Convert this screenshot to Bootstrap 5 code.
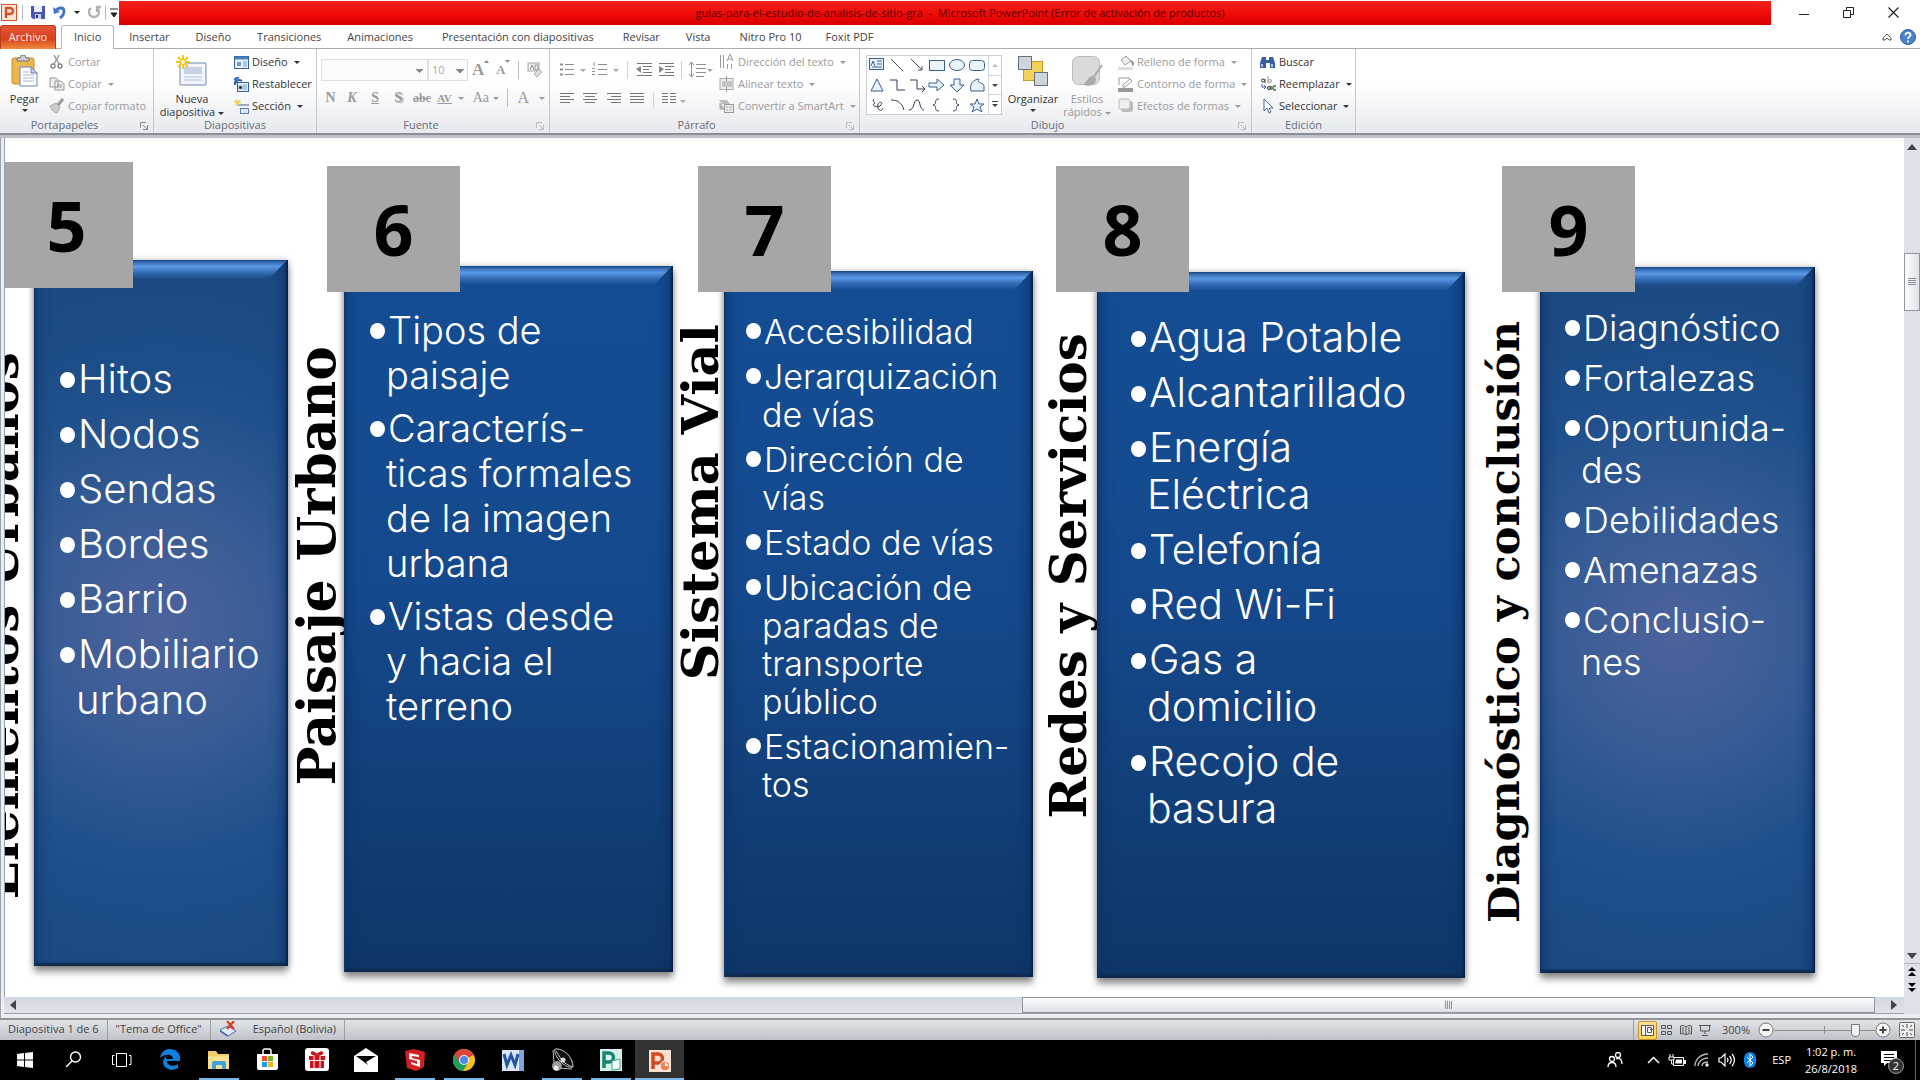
<!DOCTYPE html>
<html lang="es">
<head>
<meta charset="utf-8">
<meta name="viewport" content="width=device-width, initial-scale=1">
<title>guias-para-el-estudio-de-analisis-de-sitio-gra - Microsoft PowerPoint</title>
<link href="https://cdn.jsdelivr.net/npm/bootstrap@5.3.0/dist/css/bootstrap.min.css" rel="stylesheet">
<style>
body{font-family:"Open Sans","Noto Sans",sans-serif;font-size:11px;line-height:16px;color:#333;background:#fff;overflow:hidden}
svg{display:block;flex:none}
button{font:inherit;color:inherit;border:0;background:none;padding:0;margin:0}
.dis,.dis button{color:#9a9a9a}
.titlebar{height:25px}
.quick{width:119px;padding-left:1px}
.vsep{width:1px;background:#b9bdc3}
.redbar{background:linear-gradient(#f3241d,#f00c08 50%,#d90000);color:#5c0000;height:24px;margin-top:1px;width:1652px;flex:0 1 auto;padding-left:30px}
.winctl button{width:45px}
.tabs{height:24px;border-bottom:1px solid #a9aeb2}
.tabs .tab{height:24px;padding:4px 13px 0;color:#444;text-decoration:none;line-height:16px}
.tabs .filetab{width:56px;padding:3px 0 0;text-align:center;color:#ffeee6;background:linear-gradient(#e5573a,#d9401c 55%,#f08a3c);border:1px solid #b93d1e;border-bottom:0;border-radius:3px 3px 0 0;margin-right:5px}
.tabs .active{border:1px solid #b4b8bd;border-bottom:0;background:#fff;border-radius:3px 3px 0 0;padding:3px 12px 0;height:24px;margin-right:2px}
.ribbon{height:86px;background:linear-gradient(#fff 40%,#e6e9ee);border-bottom:2px solid #8b9097}
.rgroup{border-right:1px solid #c3c8ce;padding-top:2px;height:84px}
.rbody{height:66px}
.rlabel{height:16px;text-align:center;color:#666d78;position:relative}
.rlabel svg{position:absolute;right:5px;top:5px}
.stack button{height:22px;display:flex;align-items:center;gap:3px;white-space:nowrap}
.bigbtn{line-height:13px;text-align:center;display:flex;flex-direction:column;align-items:center}
.bigbtn svg.ico{margin-bottom:5px}
.dd{display:inline-block;border:3px solid transparent;border-top-color:currentColor;border-bottom:0;margin-left:3px;vertical-align:middle}
.serifb{font-family:"Liberation Serif",serif;font-size:14px;font-weight:700;color:#8b8b8b;text-align:center}
.fbox{height:22px;border:1px solid #dcdfe3;color:#a9a9a9;font-size:11px;border-radius:0;appearance:none;padding:0 3px;background:linear-gradient(45deg,transparent 50%,#888 50%) right 7px top 9px/4px 4px no-repeat,linear-gradient(-45deg,transparent 50%,#888 50%) right 3px top 9px/4px 4px no-repeat,#fbfbfc}
.gallery{border:1px solid #c9ced5;width:136px;height:60px;background:#fff}
.band{height:3px;background:#bcc0c7}
.work{min-height:0;border-left:1px solid #9ba1a9;padding-left:3px;background:#eceef2}
.slide{background:#fff;border-left:1px solid #9ba1a9;overflow:hidden;position:relative}
.panel{position:absolute;height:706px;color:#fff;background:linear-gradient(#134d94,#15498d 45%,#0e3667);box-shadow:inset -2px 0 2px #0a2347,inset 2px 0 2px #12366a,inset -14px 0 12px -8px #0b3064aa,inset 14px 0 12px -8px #0b306466,inset 0 -3px 2px #152c4b,0 6px 7px #0006,0 0 6px #0004;font-family:Inter,"Liberation Sans",sans-serif;font-weight:300}
.panel::before{content:"";position:absolute;left:0;right:1px;top:0;height:19px;background:linear-gradient(#174580,#3a72bb 15%,#5b98e5 35%,#2f66ae 70%,#17509700);clip-path:polygon(0 0,100% 0,calc(100% - 18px) 100%,0 100%)}
.panel.glow{background:radial-gradient(circle 330px at 50% 52%,#4d639c,#385c96 35%,#1f508b 70%,#1b4a84)}
.panel ul{list-style:none;margin:0;padding:0;display:grid;gap:8px}
.panel li{text-indent:-16px;white-space:nowrap}
.panel li::before{content:"";display:inline-block;width:15px;height:16px;border-radius:50%;background:#fff;vertical-align:5px;margin-right:3px}
.badgebox{position:absolute;width:133px;height:126px;background:#a6a6a6;color:#000;font:700 70px/126px "Open Sans","Noto Sans",sans-serif;text-align:center}
.vlabel{position:absolute;writing-mode:vertical-rl;transform:rotate(180deg);font-family:"DejaVu Serif",serif;font-weight:700;color:#000;white-space:nowrap;line-height:60px}
.vscroll{width:16px;background:#dde1e9}
.vscroll button,.hscroll button{display:flex;align-items:center;justify-content:center}
.vthumb{height:58px;border:1px solid #8f959e;background:linear-gradient(90deg,#fbfcfd,#dfe3e9)}
.hscroll{height:17px;background:linear-gradient(#d3d8e1,#dfe3ea);border-bottom:1px solid #9ba1a9}
.hthumb{border:1px solid #8f959e;background:linear-gradient(#fafbfc,#dfe3e8)}
.status{height:22px;background:linear-gradient(#e2e4e7,#bfc3c9);border-top:2px solid #8f959d;color:#444}
.status .cell{border-right:1px solid #9a9fa7;height:20px;display:flex;align-items:center;white-space:nowrap;padding-bottom:2px}
.viewbtn{width:19px;height:19px;display:flex;align-items:center;justify-content:center}
.viewbtn.on{background:linear-gradient(#fbe49a,#fdd352);border:1px solid #c8912c;border-radius:2px}
.zoomr{appearance:none;width:101px;height:16px;background:linear-gradient(#8a8f96,#8a8f96) 50px 50%/1px 8px no-repeat,linear-gradient(#8a8f96,#8a8f96) 0 50%/100% 1px no-repeat}
.zoomr::-webkit-slider-thumb{appearance:none;width:9px;height:13px;background:#f2f2f2;border:1px solid #777;border-radius:1px 1px 5px 5px}
.task{height:40px;background:#000;color:#fff}
.task .app{width:49px;height:40px;display:flex;align-items:center;justify-content:center;border-bottom:2px solid transparent;padding-top:1px}
.task .run{background:linear-gradient(#76b9ed,#76b9ed) 50% 100%/40px 2px no-repeat;border:0;padding-bottom:1px}
.task .cur{background:linear-gradient(#76b9ed,#76b9ed) 50% 100%/100% 2px no-repeat,#333;border:0}
.clock{font-size:11px;line-height:17px;text-align:center;width:64px}
</style>
<script src="https://cdn.jsdelivr.net/npm/bootstrap@5.3.0/dist/js/bootstrap.bundle.min.js"></script>
</head>
<body class="vh-100 d-flex flex-column">
<header class="titlebar d-flex">
  <div class="quick d-flex align-items-center">
    <svg width="17" height="18" viewBox="0 0 17 18"><rect x=".5" y=".5" width="15" height="16" fill="#fbe3d5" stroke="#d1542b"/><path d="M5 14V4h4a3 3 0 0 1 0 6H6" fill="none" stroke="#d1542b" stroke-width="2.4"/></svg>
    <span class="vsep ms-1 me-2" style="height:15px"></span>
    <button aria-label="Guardar"><svg width="14" height="15" viewBox="0 0 14 15"><path d="M0 1h14v13H2l-2-2z" fill="#4a55b4"/><path d="M3 1h8v6H3z" fill="#e9edfa"/><path d="M4 9h6v5H4z" fill="#c9cfe8"/><path d="M5 10h2v3H5z" fill="#2d3578"/></svg></button>
    <button class="ms-2" aria-label="Deshacer"><svg width="13" height="15" viewBox="0 0 13 15"><path d="M0 2l1 7 6-2z" fill="#3f74c8"/><path d="M3 6c2-4 8-4 8 0 0 3-1 5-4 7" fill="none" stroke="#3f74c8" stroke-width="2.8"/></svg></button>
    <span class="dd ms-2" style="color:#222"></span>
    <button class="ms-2" aria-label="Rehacer"><svg width="13" height="15" viewBox="0 0 13 15"><path d="M3 3a5 5 0 1 0 6 0M9 7V2h4" fill="none" stroke="#b3b3b3" stroke-width="2.4"/></svg></button>
    <span class="vsep ms-1" style="height:15px"></span>
    <svg class="ms-1" width="8" height="10" viewBox="0 0 8 10"><path d="M0 1h8M1 5h6l-3 4z" stroke="#222" fill="#222"/></svg>
  </div>
  <div class="redbar d-flex align-items-center justify-content-center">guias-para-el-estudio-de-analisis-de-sitio-gra&nbsp; -&nbsp; Microsoft PowerPoint (Error de activación de productos)</div>
  <div class="winctl d-flex ms-auto me-1">
    <button aria-label="Minimizar"><svg class="m-auto" width="10" height="10"><path d="M0 6.500h10" stroke="#222"/></svg></button>
    <button aria-label="Restaurar"><svg class="m-auto" width="11" height="11"><path d="M.5 3.500h7v7h-7zM3.500 3V.5h7v7H8" fill="none" stroke="#222"/></svg></button>
    <button aria-label="Cerrar"><svg class="m-auto" width="11" height="11"><path d="M.5.5l10 10M10.500.5l-10 10" stroke="#222" stroke-width="1.200"/></svg></button>
  </div>
</header>
<nav class="tabs d-flex">
  <a href="#" class="tab filetab">Archivo</a><a href="#" class="tab active">Inicio</a><a href="#" class="tab">Insertar</a><a href="#" class="tab">Diseño</a><a href="#" class="tab">Transiciones</a><a href="#" class="tab">Animaciones</a><a href="#" class="tab px-3">Presentación con diapositivas</a><a href="#" class="tab">Revisar</a><a href="#" class="tab">Vista</a><a href="#" class="tab px-3">Nitro Pro 10</a><a href="#" class="tab ps-2">Foxit PDF</a>
  <div class="ms-auto d-flex align-items-center gap-2 pe-1">
    <svg width="10" height="9"><path d="M1 6l4-4 4 4v2H7L5 6 3 8H1z" fill="none" stroke="#555"/></svg>
    <button aria-label="Ayuda"><svg width="16" height="16"><circle cx="8" cy="8" r="7.500" fill="#4a80d0" stroke="#2c5fae"/><path d="M5.500 6.300c0-3.500 5-3.300 5-.3 0 2-2.500 1.800-2.500 4M8 11.500v2" fill="none" stroke="#fff" stroke-width="1.800"/></svg></button>
  </div>
</nav>
<div class="ribbon d-flex">
  <section class="rgroup" style="width:154px">
    <div class="rbody d-flex">
      <button class="bigbtn ms-2" style="width:33px"><svg class="ico mt-1" width="28" height="32" viewBox="0 0 28 32"><rect x="1" y="3" width="22" height="26" rx="2" fill="#eab84f" stroke="#c98f2b"/><path d="M6 6V3h3a3 3 0 0 1 6 0h3v3z" fill="#ccc" stroke="#777"/><path d="M9 12h11l6 6v13H9z" fill="#fff" stroke="#6b83b5"/><path d="M12 17h6M12 20h11M12 23h11M12 26h11" stroke="#a9b9d9"/><path d="M20 12v6h6z" fill="#c6d3ea" stroke="#6b83b5"/></svg>Pegar<span class="dd mt-1 mx-0"></span></button>
      <div class="stack dis ms-2">
        <button><svg width="16" height="16"><path d="M5 1l5 9M10 1L5 10" stroke="#999" stroke-width="1.500"/><circle cx="4" cy="12" r="2" fill="none" stroke="#888" stroke-width="1.500"/><circle cx="11" cy="12" r="2" fill="none" stroke="#888" stroke-width="1.500"/></svg>Cortar</button>
        <button><svg width="16" height="16"><path d="M1 2h6l2 2v7H1zM6 5h6l3 3v6H6z" fill="#eee" stroke="#999"/><path d="M8 9h5M8 11h5" stroke="#999"/></svg>Copiar <span class="dd"></span></button>
        <button><svg width="16" height="16"><path d="M1 8l6-3 4 4-3 6c-2 0-6-3-7-7z" fill="#ccc" stroke="#aaa"/><path d="M9 7l5-6" stroke="#999" stroke-width="3"/></svg>Copiar formato</button>
      </div>
    </div>
    <div class="rlabel pe-4">Portapapeles<svg width="8" height="8"><path d="M.5 6V.5H6M3 3l4 4M7.500 3v4.500H3" fill="none" stroke="#888"/></svg></div>
  </section>
  <section class="rgroup" style="width:163px">
    <div class="rbody d-flex">
      <button class="bigbtn" style="width:76px"><svg class="ico mt-1" width="32" height="32" viewBox="0 0 32 32"><rect x="4" y="8" width="26" height="22" rx="1" fill="#f3f7fd" stroke="#7086b2"/><rect x="8" y="12" width="18" height="7" fill="#c6d2e8"/><path d="M8 22h18M8 25h18" stroke="#b0bfda"/><path d="M7 0v14M0 7h14M2 2l10 10M12 2L2 12" stroke="#f3c61e" stroke-width="2"/><circle cx="7" cy="7" r="2" fill="#fff8c0"/></svg>Nueva<span class="text-nowrap">diapositiva<span class="dd"></span></span></button>
      <div class="stack ms-1">
        <button><svg width="15" height="15"><rect x=".5" y="1.500" width="14" height="12" fill="#eaf1fb" stroke="#35619b"/><path d="M1 3h13" stroke="#4d7fc0" stroke-width="3"/><path d="M3 7h4v4H3z" fill="#6f9bd4"/><path d="M9 7h4M9 9h4M9 11h4" stroke="#6f9bd4"/></svg>Diseño<span class="dd"></span></button>
        <button><svg width="15" height="15"><rect x="3.500" y="5.500" width="11" height="9" fill="#eaf1fb" stroke="#35619b"/><path d="M9 8h4M9 10h4M9 12h4M5 9h3v3H5z" stroke="#6f9bd4"/><path d="M1 8c-1-5 4-6 7-4M5 0L1 2l2 4" fill="none" stroke="#2c62b8" stroke-width="2"/></svg>Restablecer</button>
        <button><svg width="15" height="15"><path d="M4 5h11v2H4z" fill="#9eaac0"/><rect x="6.500" y="9.500" width="8" height="5" fill="#dfe8f5" stroke="#5d7dae"/><path d="M3 0v7M0 3h7M1 1l5 5M6 1L1 6" stroke="#f0c52c"/></svg>Sección<span class="dd"></span></button>
      </div>
    </div>
    <div class="rlabel">Diapositivas</div>
  </section>
  <section class="rgroup dis" style="width:233px">
    <div class="rbody px-1 d-flex flex-column">
      <div class="d-flex align-items-center pt-2">
        <select class="fbox" style="width:107px" aria-label="Fuente"><option></option></select>
        <select class="fbox" style="width:40px" aria-label="Tamaño"><option>10</option></select>
        <button class="serifb ms-1 d-flex" style="width:20px;font-size:17px;line-height:20px">A<svg width="5" height="4"><path d="M0 3h5L2.500 0z" fill="#888"/></svg></button><button class="serifb ms-1 d-flex" style="width:22px;font-size:13px;line-height:20px">A<svg width="5" height="4"><path d="M0 0h5L2.500 3z" fill="#888"/></svg></button>
        <span class="vsep me-2" style="height:18px"></span>
        <button aria-label="Borrar formato"><svg width="16" height="16"><rect x="1" y="1" width="11" height="8" fill="#eee" stroke="#aaa"/><path d="M3 8l2-5 2 5M8 3h3v5H8z" fill="none" stroke="#999"/><path d="M7 12l5-5 3 3-5 5z" fill="#ddd" stroke="#aaa"/></svg></button>
      </div>
      <div class="d-flex align-items-center pt-2">
        <button class="serifb" style="width:20px">N</button><button class="serifb fst-italic" style="width:24px">K</button><button class="serifb text-decoration-underline" style="width:24px">S</button><button class="serifb" style="width:24px;text-shadow:2px 1px 1px #aaa">S</button><button class="serifb text-decoration-line-through" style="width:25px;font-size:12px">abc</button><button class="serifb text-nowrap text-decoration-underline" style="width:22px;font-size:11px">AV</button><span class="dd"></span><button class="serifb fw-normal ms-2" style="width:18px">Aa</button><span class="dd"></span><span class="vsep mx-2" style="height:18px"></span><button class="serifb fw-normal" style="width:16px;font-size:16px">A</button><span class="dd ms-2"></span>
      </div>
    </div>
    <div class="rlabel pe-4">Fuente<svg width="8" height="8"><path d="M.5 6V.5H6M3 3l4 4M7.500 3v4.500H3" fill="none" stroke="#bbb"/></svg></div>
  </section>
  <section class="rgroup dis" style="width:310px">
    <div class="rbody d-flex">
      <div class="ps-2" style="width:169px">
        <svg width="161" height="64" viewBox="0 0 161 64" fill="none" stroke="#8f8f8f"><path d="M7 13.500h9M7 18.500h9M7 23.500h9M40 13.500h9M40 18.500h9M40 23.500h9"/><path d="M2 13.500h3M2 18.500h3M2 23.500h3" stroke-width="2"/><path d="M36 11v4M34 17.500h3M34 20.500h3M34 23.500h3"/><path d="M22 18h6l-3 3zM55 18h6l-3 3zM149 18h6l-3 3zM122 49h6l-3 3z" fill="#aaa" stroke="none"/><path d="M69.500 10v18M123.500 10v18M95.500 42v14" stroke="#d0d3d8"/><path d="M79 12.500h15M85 15.500h9M85 18.500h6M85 21.500h9M79 24.500h15M101 12.500h15M107 15.500h9M107 18.500h6M107 21.500h9M101 24.500h15" stroke="#777"/><path d="M83 15l-5 3 5 4zM101 15l5 3-5 4z" fill="#888" stroke="none"/><path d="M133.500 11v15M131 14l2.500-3 2.500 3M131 23l2.500 3 2.500-3M138 13.500h10M138 17.500h10M138 21.500h10M138 25.500h8"/><g stroke="#777"><path d="M2 42.500h14M2 45.500h10M2 48.500h14M2 51.500h10M25 42.500h14M27 45.500h10M25 48.500h14M27 51.500h10M49 42.500h14M53 45.500h10M49 48.500h14M53 51.500h10M72 42.500h14M72 45.500h14M72 48.500h14M72 51.500h14M104 42.500h6M104 45.500h6M104 48.500h6M104 51.500h6M112 42.500h6M112 45.500h6M112 48.500h6M112 51.500h6"/></g></svg>
      </div>
      <div class="stack">
        <button><svg width="16" height="16"><path d="M1.500 1v13M4.500 1v13M8.500 10v5M12.500 10v5M8 7l3-7 3 7M9 5h4" fill="none" stroke="#999"/></svg>Dirección del texto<span class="dd"></span></button>
        <button><svg width="16" height="16"><rect x="1" y="2.500" width="13" height="11" fill="#eee" stroke="#aaa"/><path d="M3 6h10M3 8h10M3 10h10M7.500 0v5M7.500 16v-5" stroke="#999"/></svg>Alinear texto <span class="dd"></span></button>
        <button><svg width="16" height="16"><path d="M0 2h8l3 4H3z" fill="#bbb"/><rect x="5.500" y="6.500" width="9" height="8" fill="#eee" stroke="#999"/><path d="M1 5l4 6H1zM7 9h2M10 9h3M7 12h2M10 12h3" fill="#bbb" stroke="#aaa"/></svg>Convertir a SmartArt<span class="dd"></span></button>
      </div>
    </div>
    <div class="rlabel pe-3">Párrafo<svg width="8" height="8"><path d="M.5 6V.5H6M3 3l4 4M7.500 3v4.500H3" fill="none" stroke="#bbb"/></svg></div>
  </section>
  <section class="rgroup" style="width:392px">
    <div class="rbody d-flex">
      <div class="gallery ms-2 mt-1 flex-shrink-0" style="margin-left:6px!important"><svg width="134" height="58" viewBox="0 0 134 58" fill="#e9f3fc" stroke="#3a5f8f"><rect x="2.500" y="2.500" width="14" height="11"/><path d="M4 10l2-5 2 5M10 5h5M10 8h5M5 11h10" fill="none"/><path d="M24 3l12 12M44 3l11 11M55 14v-4M55 14h-4" fill="none" stroke="#444c66"/><rect x="62.500" y="4.500" width="15" height="10"/><ellipse cx="90" cy="9" rx="7.500" ry="5.500"/><rect x="102.500" y="4.500" width="15" height="10" rx="3"/><path d="M4 35l6-12 6 12z"/><path d="M23 24h7v10h8M43 24h7v9h8M55 30l3 3-3 3" fill="none" stroke="#333b55"/><path d="M62 27h8v-4l7 6-7 6v-4h-8zM87 23h6v6h4l-7 7-7-7h4zM104 35c-2-7 3-12 8-12-3 5 5 3 5 7v5z"/><path d="M7 43c-3 2 3 4 0 5s4 5 7 1-5-4-3 3c1 3 4 3 5 0M24 44c7 0 11 3 13 10M42 54c6 0 4-10 8-10s2 10 7 10M72 43c-6 0-1 5-6 6 5 1 0 6 6 6M86 43c6 0 1 5 6 6-5 1 0 6-6 6" fill="none" stroke="#333b55"/><path d="M110 43l2 5h5l-4 3 2 5-5-3-5 3 2-5-4-3h5z"/><path d="M121.500 0v58M121 19.500h13M121 38.500h13" stroke="#d0d4da"/><path d="M125 11h6l-3-3z" fill="#bbb" stroke="none"/><path d="M125 28h6l-3 3zM125 48h6l-3 3zM125 45h6v1h-6z" fill="#444" stroke="none"/></svg></div>
      <button class="bigbtn ms-1" style="width:54px"><svg class="ico mt-1" width="32" height="32" viewBox="0 0 32 32"><rect x="6.500" y="6.500" width="19" height="19" fill="#f3d25c" stroke="#c79b26"/><rect x="1.500" y="1.500" width="13" height="13" fill="#cfd3da" stroke="#666e7c"/><rect x="17.500" y="17.500" width="13" height="13" fill="#cfd3da" stroke="#666e7c"/></svg>Organizar<span class="dd mt-1 mx-0"></span></button>
      <button class="bigbtn dis" style="width:54px"><svg class="ico mt-1" width="32" height="32" viewBox="0 0 32 32"><rect x="1.500" y="1.500" width="27" height="28" rx="6" fill="#dcd9dd" stroke="#bbb"/><path d="M31 10l-9 13M22 22c-4 0-5 5-8 7 5 2 10 0 10-5z" fill="#aaa" stroke="#aaa" stroke-width="2"/></svg>Estilos<span class="text-nowrap">rápidos<span class="dd"></span></span></button>
      <div class="stack dis ms-1">
        <button><svg width="16" height="16"><path d="M3 6l5-4 5 5-6 4z" fill="#eee" stroke="#999"/><path d="M13 7c3 2 2 4 1 4" fill="none" stroke="#888" stroke-width="2"/><path d="M0 13h15v3H0z" fill="#ddd"/></svg>Relleno de forma<span class="dd"></span></button>
        <button><svg width="16" height="16"><path d="M1 9V2h11M5 9l7-6 2 2-7 6H5z" fill="none" stroke="#999"/><path d="M0 12h15v4H0z" fill="#999"/></svg>Contorno de forma<span class="dd"></span></button>
        <button><svg width="16" height="16"><rect x="3" y="3" width="12" height="11" rx="3" fill="#bbb"/><rect x="1" y="1" width="11" height="10" rx="2" fill="#eee" stroke="#bbb"/></svg>Efectos de formas<span class="dd"></span></button>
      </div>
    </div>
    <div class="rlabel pe-3">Dibujo<svg width="8" height="8"><path d="M.5 6V.5H6M3 3l4 4M7.500 3v4.500H3" fill="none" stroke="#bbb"/></svg></div>
  </section>
  <section class="rgroup" style="width:104px">
    <div class="rbody stack ps-2">
      <button><svg width="16" height="14"><path d="M2 2h4v3h3V2h4l2 6v5h-5V8H6v5H0V8z" fill="#3a5d9e"/><path d="M2 9v3M12 9v3" stroke="#a9c3ee" stroke-width="2"/></svg>Buscar</button>
      <button><svg width="16" height="16" fill="none"><circle cx="3" cy="4.500" r="1.500" stroke="#333"/><path d="M5 3v4" stroke="#333"/><path d="M8 0v7" stroke="#999"/><circle cx="10" cy="5" r="1.500" stroke="#999"/><path d="M2 8v3h4M4 9l2 2-2 2" stroke="#3a62b0"/><circle cx="9" cy="12" r="1.500" stroke="#222"/><path d="M11 10v4" stroke="#222"/><path d="M16 10c-4-1-4 5 0 4" stroke="#2c9430" stroke-width="1.800"/></svg>Reemplazar<span class="dd"></span></button>
      <button><svg width="16" height="16"><path d="M4 1v12l3-3 2 5 2-1-2-4h4z" fill="#fff" stroke="#4a669e"/></svg>Seleccionar<span class="dd"></span></button>
    </div>
    <div class="rlabel">Edición</div>
  </section>
</div>
<div class="band"></div>
<main class="work d-flex flex-grow-1 pb-1">
  <div class="d-flex flex-column flex-grow-1">
    <div class="slide flex-grow-1">
      <div class="vlabel" style="left:-34px;top:214px;font-size:50px">Elementos Urbanos</div>
      <div class="vlabel" style="left:282px;top:208px;font-size:52px">Paisaje Urbano</div>
      <div class="vlabel" style="left:665px;top:186px;font-size:51px">Sistema Vial</div>
      <div class="vlabel" style="left:1034px;top:195px;font-size:50px">Redes y Servicios</div>
      <div class="vlabel" style="left:1469px;top:183px;font-size:43px">Diagnóstico y conclusión</div>

      <div class="panel glow" style="left:29px;top:122px;width:254px;padding:96px 0 0 42px;font-size:40px;line-height:46px">
        <ul style="gap:9px"><li>Hitos</li><li>Nodos</li><li>Sendas</li><li>Bordes</li><li>Barrio</li><li>Mobiliario<br>urbano</li></ul></div>
      <div class="panel" style="left:339px;top:128px;width:329px;padding:42px 0 0 42px;font-size:38px;line-height:45px">
        <ul><li>Tipos de<br>paisaje</li><li>Caracterís-<br>ticas formales<br>de la imagen<br>urbana</li><li>Vistas desde<br>y hacia el<br>terreno</li></ul></div>
      <div class="panel" style="left:719px;top:133px;width:309px;padding:42px 0 0 38px;font-size:34px;line-height:38px">
        <ul style="gap:7px"><li>Accesibilidad</li><li>Jerarquización<br>de vías</li><li>Dirección de<br>vías</li><li>Estado de vías</li><li>Ubicación de<br>paradas de<br>transporte<br>público</li><li>Estacionamien-<br>tos</li></ul></div>
      <div class="panel" style="left:1092px;top:134px;width:368px;padding:42px 0 0 50px;font-size:41px;line-height:47px">
        <ul><li>Agua Potable</li><li>Alcantarillado</li><li>Energía<br>Eléctrica</li><li>Telefonía</li><li>Red Wi-Fi</li><li>Gas a<br>domicilio</li><li>Recojo de<br>basura</li></ul></div>
      <div class="panel glow" style="left:1535px;top:129px;width:275px;padding:40px 0 0 41px;font-size:36px;line-height:42px">
        <ul><li>Diagnóstico</li><li>Fortalezas</li><li>Oportunida-<br>des</li><li>Debilidades</li><li>Amenazas</li><li>Conclusio-<br>nes</li></ul></div>

      <div class="badgebox" style="left:-5px;top:24px">5</div>
      <div class="badgebox" style="left:322px;top:28px">6</div>
      <div class="badgebox" style="left:693px;top:28px">7</div>
      <div class="badgebox" style="left:1051px;top:28px">8</div>
      <div class="badgebox" style="left:1497px;top:28px">9</div>
    </div>
    <div class="hscroll d-flex">
      <button style="width:17px" aria-label="Izquierda"><svg width="6" height="10"><path d="M6 0v10L0 5z" fill="#444"/></svg></button>
      <div class="flex-grow-1 d-flex justify-content-end"><div class="hthumb d-flex align-items-center justify-content-center" style="width:46%"><svg width="8" height="8"><path d="M.5 0v8M2.500 0v8M4.500 0v8M6.500 0v8" stroke="#8a9098"/></svg></div></div>
      <button style="width:29px" class="ps-2" aria-label="Derecha"><svg width="6" height="10"><path d="M0 0v10l6-5z" fill="#444"/></svg></button>
    </div>
  </div>
  <div class="vscroll d-flex flex-column">
    <button style="height:18px" aria-label="Arriba"><svg width="10" height="6"><path d="M0 6h10L5 0z" fill="#444"/></svg></button>
    <div class="flex-grow-1 d-flex flex-column"><div style="flex:0 0 12.3%"></div><div class="vthumb d-flex align-items-center justify-content-center"><svg width="8" height="8"><path d="M0 .5h8M0 2.500h8M0 4.500h8M0 6.500h8" stroke="#8a9098"/></svg></div></div>
    <button style="height:16px;border-bottom:1px solid #b4b9c1" aria-label="Abajo"><svg width="10" height="6"><path d="M0 0h10L5 6z" fill="#444"/></svg></button>
    <button style="height:16px" aria-label="Diapositiva anterior"><svg width="8" height="10"><path d="M0 4h8L4 0zM0 9h8L4 5z"/></svg></button>
    <button style="height:16px" aria-label="Diapositiva siguiente"><svg width="8" height="10"><path d="M0 0h8L4 4zM0 5h8L4 9z"/></svg></button>
    <div style="height:18px"></div>
  </div>
</main>
<footer class="status d-flex align-items-center">
  <div class="cell ps-2 pe-2">Diapositiva 1 de 6</div><div class="cell ps-2 pe-2">"Tema de Office"</div>
  <div class="cell px-2 gap-3"><svg width="18" height="16"><path d="M1 9l8-4 8 5-8 5z" fill="#e6ecf8" stroke="#4a6cb0"/><path d="M1 9v2l8 5v-2" fill="#4a6cb0"/><path d="M8 0l7 8M15 0L8 8" stroke="#dd3b1c" stroke-width="2.200"/></svg>Español (Bolivia)</div>
  <div class="cell ms-auto"></div>
  <button class="viewbtn on ms-1" aria-label="Normal"><svg width="13" height="11"><path d="M.5.5h12v10H.5zM4.500 1v9M9 4.500h3M6.500 2.500h4v5h-4z" fill="#fff" stroke="#555"/></svg></button>
  <button class="viewbtn" aria-label="Clasificador"><svg width="11" height="11"><path d="M.5.5h4v3h-4zM6.500.5h4v3h-4zM.5 6.500h4v3h-4zM6.500 6.500h4v3h-4z" fill="none" stroke="#555"/></svg></button>
  <button class="viewbtn" aria-label="Lectura"><svg width="12" height="11"><path d="M6 2C4 0 2 .5.5 1v8c2-.5 4-.5 5.500 1 1.500-1.500 3.500-1.500 5.500-1V1C10 .5 8 0 6 2v8M2 3h2M2 5h2M2 7h2M8 3h2M8 5h2M8 7h2" fill="none" stroke="#555"/></svg></button>
  <button class="viewbtn" aria-label="Presentación"><svg width="12" height="11"><path d="M0 .5h12M1.500 1v5h9V1M6 6v3M3 10.500h6" fill="none" stroke="#555"/></svg></button>
  <span class="mx-2 text-center" style="width:28px">300%</span>
  <button aria-label="Alejar"><svg width="16" height="16"><circle cx="8" cy="8" r="7" fill="#f4f4f4" stroke="#777"/><path d="M4.500 8h7" stroke="#444" stroke-width="2"/></svg></button>
  <input class="zoomr" type="range" min="0" max="100" value="84" aria-label="Zoom">
  <button aria-label="Acercar"><svg width="16" height="16"><circle cx="8" cy="8" r="7" fill="#f4f4f4" stroke="#777"/><path d="M4.500 8h7M8 4.500v7" stroke="#444" stroke-width="2"/></svg></button>
  <button class="ms-2 me-1" aria-label="Ajustar"><svg width="17" height="16"><rect x=".5" y=".5" width="15" height="15" rx="1" fill="#eee" stroke="#666"/><path d="M8 2v4M8 10v4M2 8h4M10 8h4M3 3l2 2M13 3l-2 2M3 13l2-2M13 13l-2-2" stroke="#444"/></svg></button>
</footer>
<nav class="task d-flex">
  <button class="app" aria-label="Inicio"><svg width="16" height="16"><path d="M0 2l7-1v6.500H0zM8 1l8-1v7.500H8zM0 8.500h7V15l-7-1zM8 8.500h8V16l-8-1z" fill="#fff"/></svg></button>
  <button class="app" aria-label="Buscar"><svg width="17" height="17" fill="none" stroke="#fff" stroke-width="1.400"><circle cx="10.500" cy="6" r="5"/><path d="M7 10l-6 6"/></svg></button>
  <button class="app" aria-label="Vista de tareas" style="width:47px"><svg width="20" height="14" fill="none" stroke="#fff"><path d="M4.500.5h10v13h-10zM2.500 2.500h-2v9h2M17 2.500h2v9h-2"/></svg></button>
  <button class="app" aria-label="Edge"><svg width="20" height="21" viewBox="0 0 20 21"><path d="M0 9C1 3 5 0 10 0c6 0 10 4 10 9v3H7c0 5 7 6 11 3v4c-6 4-15 1-15-6 0-3 2-5 4-6-1 1-1 2-1 3h7c0-5-8-6-13-1z" fill="#0f7fdc"/></svg></button>
  <button class="app run" aria-label="Explorador"><svg width="22" height="18"><path d="M0 0h8l2 3h11v15H0z" fill="#f3cf6b"/><path d="M0 5h21v13H0z" fill="#fbe08d"/><path d="M4 18v-6q0-2 2-2h10q2 0 2 2v6h-4v-4H8v4z" fill="#3ba3dc"/></svg></button>
  <button class="app" aria-label="Tienda"><svg width="23" height="23"><path d="M7 6V3q0-2 2-2h4q2 0 2 2v3" fill="none" stroke="#fff" stroke-width="1.500"/><path d="M1 6h21v14q0 2-2 2H3q-2 0-2-2z" fill="#fff"/><path d="M6 8h5v5H6z" fill="#e8502a"/><path d="M12 8h5v5h-5z" fill="#78b52f"/><path d="M6 14h5v5H6z" fill="#1f9ce0"/><path d="M12 14h5v5h-5z" fill="#f5b616"/></svg></button>
  <button class="app" aria-label="Regalos"><svg width="24" height="23"><rect width="24" height="23" rx="3" fill="#fff"/><path d="M4 8h16v4H4zM5 13h14v7H5z" fill="#c8141d"/><path d="M9 8v12M15 8v12" stroke="#fff"/><path d="M12 7C4 7 6 1 12 7c6-6 8 0 0 0z" fill="none" stroke="#c8141d" stroke-width="2"/></svg></button>
  <button class="app" aria-label="Correo"><svg width="24" height="24"><path d="M0 8l12-8 12 8v16H0z" fill="#fff"/><path d="M2 8h20l-10 6 2 3z" fill="#000"/></svg></button>
  <button class="app run" aria-label="SketchUp"><svg width="22" height="22"><path d="M1 2l9-2 11 3-1 15-8 4-9-3z" fill="#d21f1f"/><path d="M5 4l10 2v2l-7-1v2l8 2v7l-9-3v-2l6 2v-3l-8-2z" fill="#fff"/></svg></button>
  <button class="app run" aria-label="Chrome"><svg width="22" height="22" viewBox="0 0 22 22"><circle cx="11" cy="11" r="11" fill="#fbc116"/><path d="M11 11L1.500 5.500A11 11 0 0 1 20.500 6z" fill="#db4437"/><path d="M11 11L1.500 5.500A11 11 0 0 0 10 22l5-8z" fill="#1a9f5b"/><path d="M11 6h9.600a11 11 0 0 0-19-.5L6 13z" fill="#db4437"/><circle cx="11" cy="11" r="5" fill="#fff"/><circle cx="11" cy="11" r="4" fill="#4a86ee"/></svg></button>
  <button class="app" aria-label="Word"><svg width="22" height="22"><path d="M0 1h22v21H0z" fill="#dce8f8"/><path d="M17 1h5v21h-5z" fill="#7ea5dc"/><path d="M2 5l3 11 4-10 4 10 3-11" fill="none" stroke="#2454a4" stroke-width="3"/></svg></button>
  <button class="app run" aria-label="Audio"><svg width="24" height="24"><path d="M5 1c9-1 18 8 18 18-5 1-10-2-14-7C6 8 4 4 5 1z" fill="#111" stroke="#ccc"/><path d="M3 2l1 12 5 6 13 1M6 3l7 11 9 5" stroke="#bbb" fill="none"/><circle cx="7" cy="18" r="5" fill="#999"/><circle cx="6" cy="20" r="2.500" fill="#eee"/><circle cx="13" cy="12" r="2.500" fill="#ddd"/></svg></button>
  <button class="app run" aria-label="Publisher"><svg width="22" height="22"><rect width="22" height="22" fill="#d7f1ea"/><path d="M4 19V4h5a4 4 0 0 1 0 9H5" fill="none" stroke="#16866f" stroke-width="3.500"/><path d="M12 12l8-2v10l-8 1z" fill="#f4fffc" stroke="#38a38c"/></svg></button>
  <button class="app cur" aria-label="PowerPoint"><svg width="22" height="22"><rect width="22" height="22" fill="#fbe0d2"/><path d="M4 19V4h5a4 4 0 0 1 0 9H5" fill="none" stroke="#cf4a1f" stroke-width="3.500"/><circle cx="16" cy="16" r="5" fill="#f0805a" stroke="#fff"/><path d="M16 16v-4l4 4z" fill="#fff"/></svg></button>
  <div class="ms-auto d-flex align-items-center">
    <svg width="16" height="16" fill="none" stroke="#fff" stroke-width="1.300"><circle cx="5" cy="7" r="2.500"/><circle cx="11" cy="3" r="2.500"/><path d="M1 15c0-6 8-6 8 0M9 7c4-2 6 1 6 5"/></svg>
    <svg class="ms-4" width="13" height="8"><path d="M1 7l5.500-5.500L12 7" fill="none" stroke="#fff" stroke-width="1.500"/></svg>
    <svg class="ms-2" width="18" height="13"><path d="M5.500 3.500h10v8h-10z" fill="#000" stroke="#fff"/><path d="M8 5.500h6v4H7z" fill="#fff"/><path d="M17 6v4" stroke="#fff" stroke-width="2"/><path d="M1 3h5v3H1zM2 0v3M5 0v3M3.500 6v4H5" stroke="#fff" fill="#000"/></svg>
    <svg class="ms-2" width="16" height="14" fill="none" stroke="#bbb" stroke-width="1.300"><path d="M1 13C1 7 6 1 14 1M4 13c0-4 4-8 10-8M8 13c0-2 2-4 6-4"/><circle cx="13" cy="12" r="1" stroke="#fff"/></svg>
    <svg class="ms-2" width="18" height="14" fill="none" stroke="#fff" stroke-width="1.200"><path d="M1 5h2l4-4v12L3 9H1zM9 5q2 2 0 4M11.500 3q3.500 4 0 8M14 1q5 6 0 12"/></svg>
    <svg class="ms-2" width="12" height="16"><rect width="12" height="16" rx="6" fill="#0a84e8"/><path d="M3 5l6 6-3 3V2l3 3-6 6" fill="none" stroke="#fff"/></svg>
    <span class="ms-3">ESP</span>
    <div class="clock ms-2">1:02 p. m.<br>26/8/2018</div>
    <svg class="ms-3" width="28" height="30" viewBox="0 0 28 30"><path d="M2 6h16v12H8l-3 3v-3H2z" fill="#fff"/><path d="M5 9.500h10M5 12.500h10M5 15.500h7" stroke="#000"/><circle cx="17" cy="21" r="7.500" fill="#333" stroke="#999"/><text x="17" y="25" font-size="11" fill="#fff" text-anchor="middle">2</text></svg>
    <span class="ms-2 me-1" style="width:1px;height:40px;background:#666"></span>
  </div>
</nav>
</body>
</html>
